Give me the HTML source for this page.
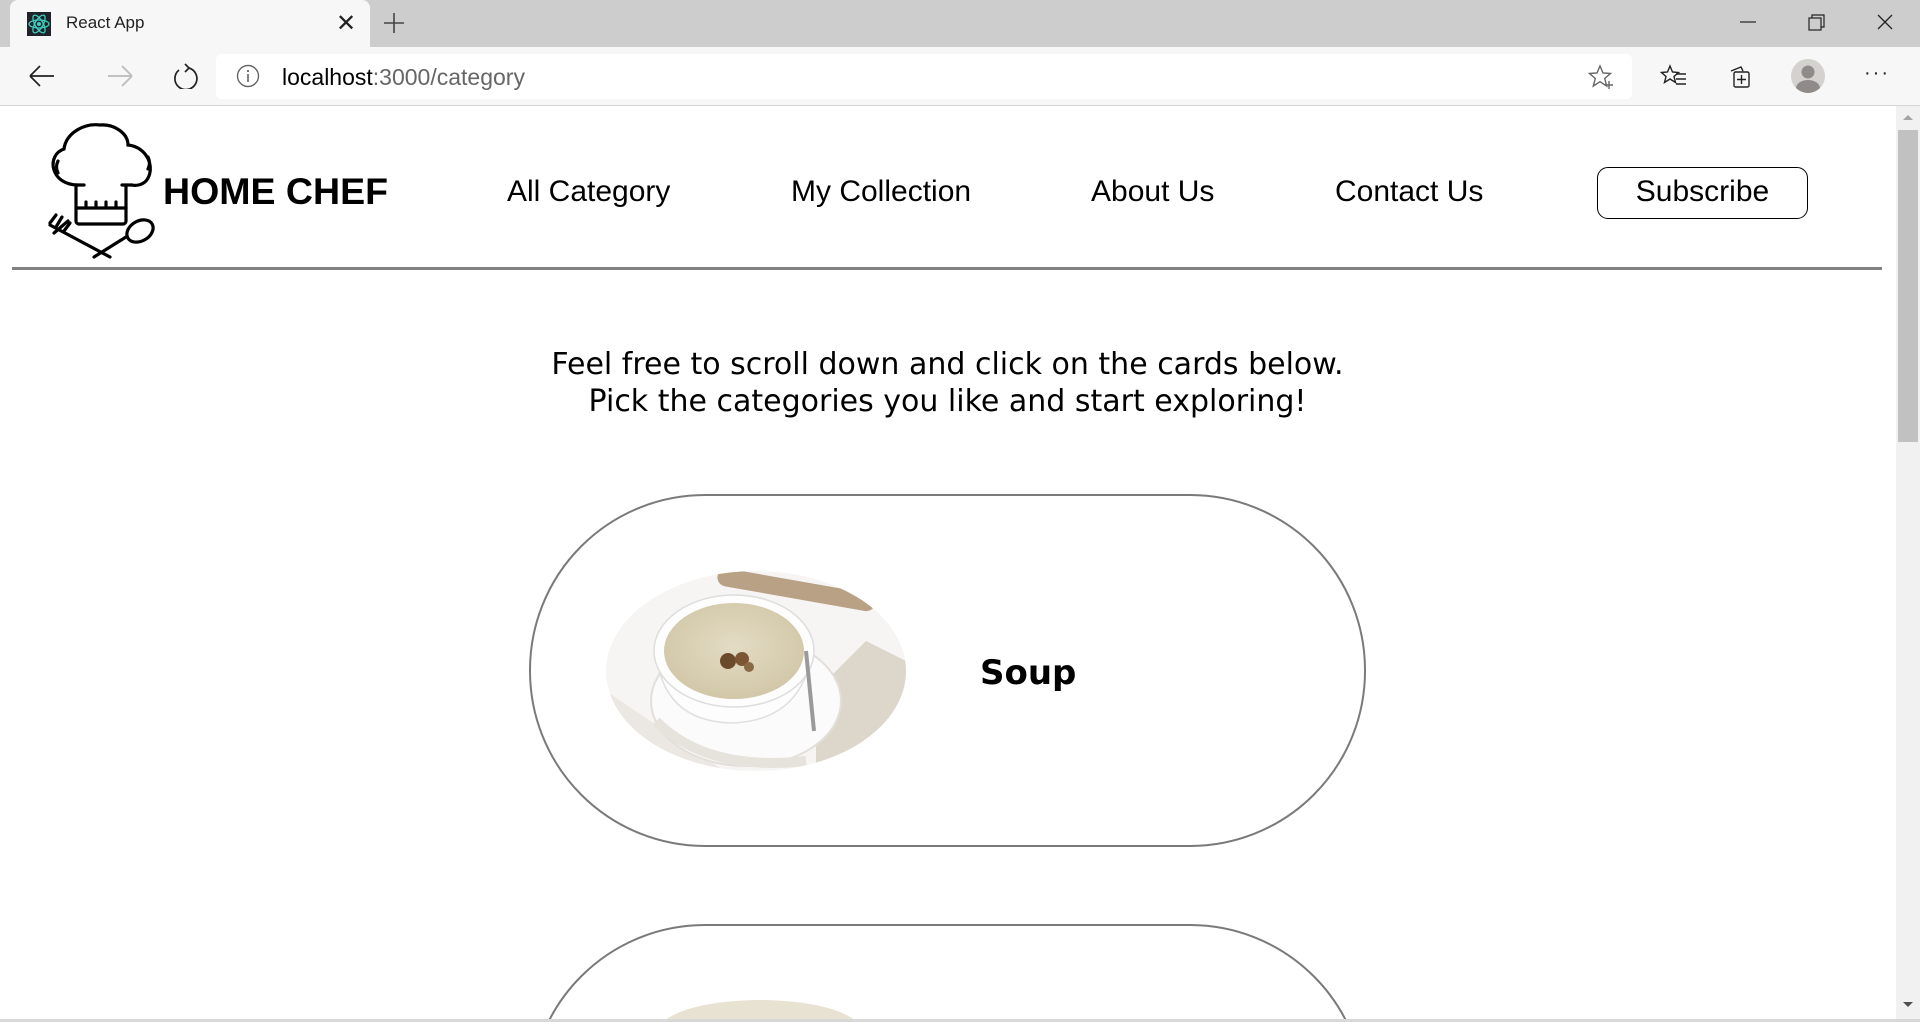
<!DOCTYPE html>
<html style="overflow:hidden;width:1920px;height:1022px"><head><meta charset="utf-8"><style>
*{margin:0;padding:0;box-sizing:border-box}
body{width:1920px;height:1022px;overflow:hidden;background:#fff;font-family:"Liberation Sans",sans-serif;position:relative}
.abs{position:absolute}
#tabbar{left:0;top:0;width:1920px;height:47px;background:#cdcdcd}
#tab{left:10px;top:0;width:360px;height:47px;background:#f7f7f7;border-radius:8px 8px 0 0}
#toolbar{left:0;top:47px;width:1920px;height:59px;background:#f7f7f7;border-bottom:1px solid #d6d6d6}
#addr{left:216px;top:54px;width:1416px;height:45px;background:#fff;border-radius:6px}
.nav{position:absolute;top:174px;font-size:30px;color:#000;line-height:36px}
#msg{position:absolute;left:0;width:1895px;top:346px;text-align:center;font-family:"DejaVu Sans",sans-serif;font-size:30px;line-height:37px;color:#000}
.card{position:absolute;left:529px;width:837px;height:353px;border:2.5px solid #7a7a7a;border-radius:176px;background:#fff}
</style></head><body>
<div class="abs" id="tabbar"></div>
<div class="abs" id="tab"></div>
<svg class="abs" style="left:27px;top:12px" width="24" height="24" viewBox="0 0 24 24"><rect width="24" height="24" fill="#20232a"/><g fill="none" stroke="#3ed0c0" stroke-width="1.3"><ellipse cx="12" cy="12" rx="10" ry="4"/><ellipse cx="12" cy="12" rx="10" ry="4" transform="rotate(60 12 12)"/><ellipse cx="12" cy="12" rx="10" ry="4" transform="rotate(120 12 12)"/></g><circle cx="12" cy="12" r="2" fill="#3ed0c0"/></svg>
<div class="abs" style="left:66px;top:13px;font-size:17px;color:#222">React App</div>
<div class="abs" style="left:336px;top:9px;font-size:24px;color:#222">✕</div>
<svg class="abs" style="left:383px;top:12px" width="22" height="22"><path d="M11 1v20M1 11h20" stroke="#444" stroke-width="1.6"/></svg>
<svg class="abs" style="left:1738px;top:12px" width="170" height="22"><path d="M2 10h16" stroke="#222" stroke-width="1.2"/><rect x="71" y="6" width="12" height="12" fill="none" stroke="#222" stroke-width="1.2"/><path d="M74 6V3h12v12h-3" fill="none" stroke="#222" stroke-width="1.2"/><path d="M140 3l14 14M154 3l-14 14" stroke="#222" stroke-width="1.3"/></svg>
<div class="abs" id="toolbar"></div>
<svg class="abs" style="left:28px;top:63px" width="200" height="26"><path d="M2 13h24M2 13l10-10M2 13l10 10" fill="none" stroke="#222" stroke-width="1.7"/><path d="M80 13h24M104 13l-10-10M104 13l-10 10" fill="none" stroke="#bbb" stroke-width="1.7"/><path d="M151 7a11 11 0 1 0 10-2" fill="none" stroke="#222" stroke-width="1.7"/><path d="M157 1l4 4-4 4" fill="none" stroke="#222" stroke-width="1.7"/></svg>
<div class="abs" id="addr"></div>
<svg class="abs" style="left:236px;top:64px" width="24" height="24"><circle cx="12" cy="12" r="10.5" fill="none" stroke="#666" stroke-width="1.4"/><path d="M12 10v8" stroke="#666" stroke-width="1.6"/><circle cx="12" cy="7" r="1.1" fill="#666"/></svg>
<div class="abs" style="left:282px;top:64px;font-size:23px;color:#000">localhost<span style="color:#666">:3000/category</span></div>
<svg class="abs" style="left:1588px;top:64px" width="28" height="26"><path d="M12 2l3 7 7.5.5-5.8 5 2 7.5-6.7-4.3-6.7 4.3 2-7.5L1.5 9.5 9 9z" fill="none" stroke="#666" stroke-width="1.4"/><path d="M21 17v8M17 21h8" stroke="#666" stroke-width="1.4"/></svg>
<svg class="abs" style="left:1660px;top:64px" width="30" height="26"><path d="M10 2l2.5 6 6 .5-4.5 4 1.5 6-5.5-3.5-5.5 3.5 1.5-6L1.5 8.5l6-.5z" fill="none" stroke="#222" stroke-width="1.4"/><path d="M16 10h10M16 15h10M16 20h10" stroke="#222" stroke-width="1.4"/></svg>
<svg class="abs" style="left:1727px;top:63px" width="28" height="28"><path d="M4 8l10-4 2 4" fill="none" stroke="#222" stroke-width="1.4"/><rect x="7" y="9" width="15" height="15" rx="1.5" fill="none" stroke="#222" stroke-width="1.4"/><path d="M14.5 12v9M10 16.5h9" stroke="#222" stroke-width="1.4"/></svg>
<svg class="abs" style="left:1791px;top:59px" width="34" height="34"><circle cx="17" cy="17" r="17" fill="#d4d2cf"/><circle cx="17" cy="13" r="6.5" fill="#8e8b88"/><path d="M5 29a12 8 0 0 1 24 0a17 17 0 0 1-24 0z" fill="#8e8b88"/></svg>
<div class="abs" style="left:1864px;top:62px;font-size:20px;color:#222;letter-spacing:2px">···</div>

<div class="abs" style="left:1896px;top:106px;width:24px;height:916px;background:#f1f1f1"></div>
<div class="abs" style="left:1898px;top:130px;width:20px;height:312px;background:#c1c1c1"></div>
<svg class="abs" style="left:1900px;top:112px" width="16" height="10"><path d="M3 8l5-5 5 5z" fill="#a3a3a3"/></svg>
<svg class="abs" style="left:1900px;top:1000px" width="16" height="10"><path d="M3 2l5 5 5-5z" fill="#505050"/></svg>

<svg class="abs" style="left:48px;top:123px" width="110" height="136" viewBox="0 0 110 136" fill="none" stroke="#000" stroke-width="3.2" stroke-linecap="round">
<path d="M30 62C2 62 -2 32 16 26 18 10 36 0 52 2 66 1 80 10 80 22 100 24 108 46 98 58 94 62 88 63 84 62"/>
<path d="M10 38c-2 4-2 8 0 12M100 34c2 4 2 8 0 12"/>
<path d="M30 62h6M74 62h10"/>
<path d="M28 62v36a3 3 0 0 0 3 3h44a3 3 0 0 0 3-3V62"/>
<path d="M28 85h50M38 85v-6M48 85v-6M58 85v-6M68 85v-6"/>
<path d="M2 102l60 32M8 92l-6 8M14 94l-6 10M22 100l-6 8M6 110l14 -12"/>
<path d="M46 134l32-20"/>
<ellipse cx="92" cy="108" rx="14" ry="10" transform="rotate(-30 92 108)"/>
</svg>
<div class="abs" style="left:163px;top:170px;font-size:37.5px;font-weight:bold;color:#000">HOME CHEF</div>

<div class="nav" style="left:507px">All Category</div>
<div class="nav" style="left:791px">My Collection</div>
<div class="nav" style="left:1091px">About Us</div>
<div class="nav" style="left:1335px">Contact Us</div>
<div class="abs" style="left:1597px;top:167px;width:211px;height:52px;border:1.6px solid #000;border-radius:11px;font-size:30px;text-align:center;line-height:48px">Subscribe</div>

<div class="abs" style="left:12px;top:267px;width:1870px;height:3px;background:#808080"></div>

<div id="msg">Feel free to scroll down and click on the cards below.<br>Pick the categories you like and start exploring!</div>

<div class="card" style="top:494px"></div>
<svg class="abs" style="left:606px;top:571px" width="300" height="201" viewBox="0 0 300 201">
<defs><clipPath id="c"><ellipse cx="150" cy="100" rx="150" ry="100"/></clipPath>
<radialGradient id="s" cx="50%" cy="45%" r="55%"><stop offset="0" stop-color="#e3dcc4"/><stop offset="1" stop-color="#d2c7a8"/></radialGradient></defs>
<g clip-path="url(#c)">
<rect width="300" height="201" fill="#f6f5f3"/>
<path d="M0 120 L120 201 H0z" fill="#ebe8e3"/>
<path d="M210 120 L260 70 300 90 300 201 210 201z" fill="#ddd6cb"/>
<rect x="110" y="8" width="160" height="18" rx="9" fill="#b9a186" transform="rotate(10 180 20)"/>
<ellipse cx="140" cy="130" rx="95" ry="65" fill="#fbfbfb" stroke="#e2dfda" stroke-width="2"/>
<path d="M50 80 Q56 150 125 152 Q196 150 206 80z" fill="#fdfdfd" stroke="#e0e0e0" stroke-width="1.5"/>
<ellipse cx="128" cy="80" rx="80" ry="56" fill="#fdfdfd" stroke="#ddd" stroke-width="1.5"/>
<ellipse cx="128" cy="80" rx="70" ry="48" fill="url(#s)"/>
<circle cx="122" cy="90" r="8" fill="#6b4a2c"/><circle cx="136" cy="88" r="7" fill="#7c5634"/><circle cx="143" cy="96" r="5" fill="#8a6a44"/>
<path d="M200 80 L208 160" stroke="#9a9a9a" stroke-width="4"/>
<path d="M50 150 Q100 201 200 190" stroke="#e6e2dc" stroke-width="10" fill="none"/>
</g></svg>
<div class="abs" style="left:980px;top:653px;font-family:'DejaVu Sans',sans-serif;font-weight:bold;font-size:34px;color:#000">Soup</div>

<div class="abs" style="left:0;top:924px;width:1896px;height:95px;overflow:hidden">
<div class="card" style="top:0"></div>
<div class="abs" style="left:660px;top:76px;width:200px;height:60px;border-radius:50%;background:#e8e2d2"></div>
</div>
<div class="abs" style="left:0;top:1019px;width:1920px;height:3px;background:#d8d8d8"></div>
</body></html>
